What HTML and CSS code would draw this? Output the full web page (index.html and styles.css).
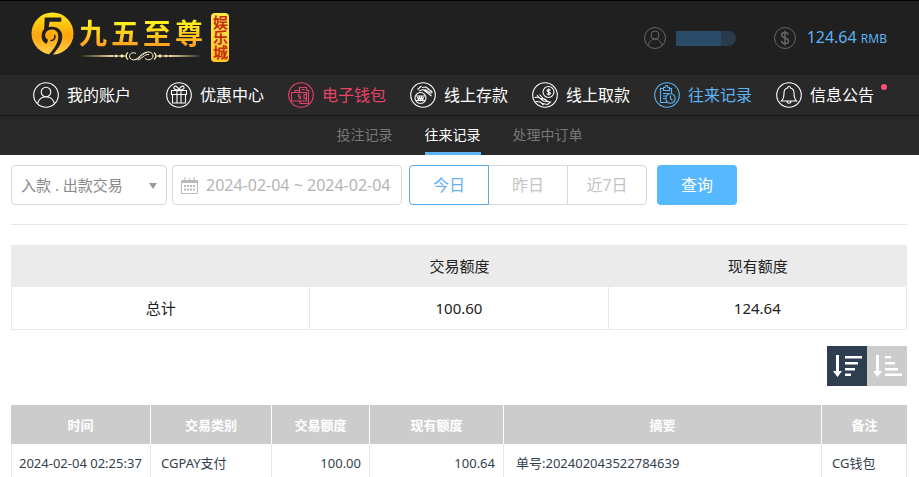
FILE: index.html
```html
<!DOCTYPE html>
<html lang="zh-CN">
<head>
<meta charset="utf-8">
<meta name="viewport" content="width=device-width, initial-scale=1">
<title>往来记录</title>
<link rel="stylesheet" href="styles.css">
</head>
<body>
<header class="top">
  <a class="logo" href="#">
    <svg class="logo-mark" viewBox="0 0 44 44" aria-hidden="true">
      <defs>
        <linearGradient id="gold" x1="0" y1="0" x2="0" y2="1">
          <stop offset="0" stop-color="#ffe816"/>
          <stop offset="0.55" stop-color="#ffa40c"/>
          <stop offset="1" stop-color="#ffd04a"/>
        </linearGradient>
      </defs>
      <circle cx="22" cy="22" r="21.5" fill="url(#gold)"/>
      <path d="M14 5.500H31V10H19L18 15.500C26 13.500 32 18 32 25C32 33 26 39 22 44H18C23 38 28 32 28 25C28 20.500 25 18 21.500 18C17 18 14.500 21 14.500 24C14.500 26 15.500 27.500 17.500 28.500L16 32.500C12 31 10.500 27.500 11 23.500C11.300 21 12 19 13.500 17.500Z" fill="#202020"/>
      <path d="M20 29.500C24 29 25.500 26 24 23.500" fill="none" stroke="#202020" stroke-width="1.500"/>
    </svg>
    <span class="logo-words">
      <span class="logo-name"><span>九</span><span>五</span><span>至</span><span>尊</span></span>
      <svg class="logo-flourish" viewBox="0 0 124 12" aria-hidden="true">
        <path d="M0 6L34 5V7ZM124 6L90 5V7Z" fill="#e9dda0"/>
        <path d="M34 6H48M76 6H90" stroke="#f5ebb0" fill="none"/>
        <path d="M35 6l2-1.500 2 1.500-2 1.500ZM41 6l2-2 2 2-2 2ZM79 6l2-2 2 2-2 2ZM85 6l2-1.500 2 1.500-2 1.500Z" fill="#f5ebb0"/>
        <path d="M49 2.500Q45 6 49 9.500M75 2.500Q79 6 75 9.500" stroke="#f5ebb0" stroke-width="1.300" fill="none"/>
        <path d="M57 3.500C53 1 49 5 51 8C55 12.500 61 8 64 4.500C68 0 74 2 74 6C74 9.500 69 11 66 8.500M56 9.500C60 9 61 3 68 2.500M59 10C63 9 65 4 70 4.500" stroke="#fff6c8" stroke-width="1" fill="none"/>
      </svg>
    </span>
    <span class="logo-tag">娱乐城</span>
  </a>
  <div class="account">
    <svg class="account-icon" viewBox="0 0 24 24" aria-hidden="true">
      <circle cx="12" cy="12" r="10.500"/><circle cx="12" cy="9" r="4"/><path d="M5 19.500C6 15 9 13 12 13s6 2 7 6.500"/>
    </svg>
    <span class="account-name"></span>
    <svg class="account-icon" viewBox="0 0 24 24" aria-hidden="true">
      <circle cx="12" cy="12" r="10.500"/><path stroke-width="1.500" d="M15.500 8.500C15 7 13.500 6.500 12 6.500c-2 0-3.300 1-3.300 2.600 0 3.700 6.800 2 6.800 5.600 0 1.700-1.500 2.800-3.500 2.800-2 0-3.300-.8-3.700-2.500M12 4.500v15"/>
    </svg>
    <span class="balance">124.64 <small>RMB</small></span>
  </div>
</header>

<nav class="main-nav">
  <a class="nav-item nav-item-lead" href="#">
    <svg viewBox="0 0 26 26" aria-hidden="true"><circle cx="13" cy="13" r="12.300"/><circle cx="13" cy="10" r="4.800"/><path d="M4.500 21.500C6 17 9 14.800 13 14.800s7 2.200 8.500 6.700"/></svg>
    我的账户
  </a>
  <a class="nav-item" href="#">
    <svg viewBox="0 0 26 26" aria-hidden="true"><circle cx="13" cy="13" r="12.300"/><path d="M5.500 8.500h15v4h-15ZM6.500 12.500h13v8.500h-13ZM11 8.500V21M15 8.500V21M13 8C10 8 7 7 8 5s4-.5 5 3c1-3.500 4-5 5-3s-2 3-5 3"/></svg>
    优惠中心
  </a>
  <a class="nav-item nav-item-wallet" href="#">
    <svg viewBox="0 0 26 26" aria-hidden="true"><circle cx="13" cy="13" r="12.300"/><path d="M3.500 10.500h15V19h-15ZM7 10.500V8.500h4M11.500 10.500v-5h7v3M13.500 7.500h3M18.500 8.500h2V21.500h-8.500V19M18.500 12.500h-2.500v4h2.500"/><path d="M12.500 12.700h-2v2h2v2h-2"/></svg>
    电子钱包
  </a>
  <a class="nav-item" href="#">
    <svg viewBox="0 0 26 26" aria-hidden="true"><circle cx="13" cy="13" r="12.300"/><circle cx="10.500" cy="16" r="5.500"/><path d="M6 14h9M6 18.500h9M7.500 15l1 3 1-3 1 3 1-3 1 3 1-3M7.500 7.500l4-3.500M9 9l4-1.500 4 3 4.500 3.500M12 5.500l4-.5 6.500 5.500M14.500 7.500l7 4M17 6.500l5 3"/></svg>
    线上存款
  </a>
  <a class="nav-item" href="#">
    <svg viewBox="0 0 26 26" aria-hidden="true"><circle cx="13" cy="13" r="12.300"/><circle cx="16.500" cy="10" r="5.500"/><path d="M18.300 8.500c-.5-1.300-3.300-1.300-3.300.2s3.500 1 3.500 2.600-3 1.500-3.600.2M16.700 6.500v7M2.500 15.500l4-.5-1.500-2M6.500 15l5 4M7.500 12.500l5 5.500M3.500 19.500l5 .5 3 3M11.500 19l7 1-3 2.500-5-1M9 16.500l4 .5 3 3"/></svg>
    线上取款
  </a>
  <a class="nav-item nav-item-current" href="#" aria-current="page">
    <svg viewBox="0 0 26 26" aria-hidden="true"><circle cx="13" cy="13" r="12.300"/><path d="M9.500 6.500h-3v14H13M15.500 6.500h2v5M9.500 8.500v-3H11c0-2.500 3-2.500 3 0h1.500v3ZM9 11.500h6M9 14h3.500M9 16.500h2.500"/><circle cx="16.500" cy="16.500" r="4.700"/><path d="M16.500 13.500v3l2 2"/></svg>
    往来记录
  </a>
  <a class="nav-item" href="#">
    <svg viewBox="0 0 26 26" aria-hidden="true"><circle cx="13" cy="13" r="12.300"/><path d="M5.500 19c2-2 2.500-3.500 2.500-8 0-3 1.500-4.500 3.500-5 0-2 3-2 3 0 2 .5 3.500 2 3.500 5 0 4.500.5 6 2.500 8ZM11 19c0 3 4 3 4 0"/></svg>
    信息公告
    <span class="nav-dot"></span>
  </a>
</nav>

<nav class="sub-nav">
  <a href="#">投注记录</a>
  <a class="is-active" href="#">往来记录</a>
  <a href="#">处理中订单</a>
</nav>

<main class="content">
  <form class="filters">
    <div class="select-box">
      <select aria-label="交易类型"><option>入款 . 出款交易</option></select>
    </div>
    <label class="date-box">
      <svg viewBox="0 0 17 17" aria-hidden="true"><path fill="none" stroke="currentColor" d="M.5 3.500h16v13H.5ZM1 4.500h15M1 5.500h15M4 0v3M8.500 1v3M13 0v3"/><path fill="none" stroke="currentColor" stroke-width="2" stroke-dasharray="2 1" d="M3 9h11M3 12.500h11"/></svg>
      <input type="text" value="2024-02-04 ~ 2024-02-04" aria-label="日期范围">
    </label>
    <div class="day-group">
      <button type="button" class="is-active">今日</button>
      <button type="button">昨日</button>
      <button type="button">近7日</button>
    </div>
    <button type="submit" class="query">查询</button>
  </form>

  <table class="summary">
    <thead><tr><th></th><th>交易额度</th><th>现有额度</th></tr></thead>
    <tbody><tr><td>总计</td><td>100.60</td><td>124.64</td></tr></tbody>
  </table>

  <div class="sort">
    <button type="button" class="is-active" aria-label="降序">
      <svg viewBox="0 0 40 40" aria-hidden="true"><path d="M9 9h3v16h3l-4.500 6L6 25h3ZM18 10h17v2.500H18ZM18 16h13v2.500H18ZM18 22h10v2.500H18ZM18 27.500h6V30h-6Z"/></svg>
    </button>
    <button type="button" aria-label="升序">
      <svg viewBox="0 0 40 40" aria-hidden="true"><path d="M9 9h3v16h3l-4.500 6L6 25h3ZM18 10h6v2.500h-6ZM18 16h10v2.500H18ZM18 22h13v2.500H18ZM18 27.500h17V30H18Z"/></svg>
    </button>
  </div>

  <table class="records">
    <colgroup><col class="col-time"><col class="col-type"><col class="col-amount"><col class="col-balance"><col><col class="col-note"></colgroup>
    <thead>
      <tr><th>时间</th><th>交易类别</th><th>交易额度</th><th>现有额度</th><th>摘要</th><th>备注</th></tr>
    </thead>
    <tbody>
      <tr><td class="time">2024-02-04 02:25:37</td><td>CGPAY支付</td><td class="num">100.00</td><td class="num">100.64</td><td class="memo">单号:202402043522784639</td><td>CG钱包</td></tr>
    </tbody>
  </table>
</main>
</body>
</html>
```
FILE: styles.css
```css
* {
  box-sizing: border-box;
}

body {
  height: 100vh;
  margin: 0;
  overflow: auto;
  scrollbar-width: none;
  background: #fff;
  color: #222;
  font: 15px/20px "Noto Sans", "Noto Sans CJK SC", sans-serif;
}

a {
  color: inherit;
  text-decoration: none;
}

button,
input,
select {
  margin: 0;
  font: inherit;
}

/* Header */
.top {
  display: flex;
  justify-content: space-between;
  height: 75px;
  padding: 0 32px 0 31px;
  border-top: 1px solid #000;
  background: #202020;
}

.logo {
  display: flex;
  align-items: flex-start;
  padding-top: 11px;
}

.logo-mark {
  width: 43px;
  height: 43px;
}

.logo-words {
  display: flex;
  flex-direction: column;
  margin: 4px 8px 0 5px;
}

.logo-name {
  display: flex;
  gap: 4px;
  font-size: 28px;
  font-weight: 700;
  line-height: 34px;
}

.logo-name span {
  background: linear-gradient(#fff21c 20%, #ffa51e 85%);
  background-clip: text;
  -webkit-background-clip: text;
  color: transparent;
}

.logo-flourish {
  width: 124px;
  height: 12px;
}

.logo-tag {
  width: 18px;
  margin-top: 1px;
  padding: 2px 0;
  border-radius: 4px;
  background: linear-gradient(#ffe94a, #ffc928);
  color: #c62b10;
  font-size: 15px;
  font-weight: 700;
  line-height: 18px;
  white-space: nowrap;
  writing-mode: vertical-rl;
}

.account {
  display: flex;
  align-items: center;
  color: #5cb3f5;
  font-size: 16px;
}

.account-icon {
  width: 24px;
  height: 24px;
  fill: none;
  stroke: #666;
}

.account-name {
  width: 60px;
  height: 15px;
  margin: 0 37px 0 9px;
  border-radius: 0 8px 8px 0;
  background: linear-gradient(90deg, #2a4b68 75%, #283a4b 75%);
}

.balance {
  margin-left: 10px;
}

.balance small {
  font-size: 12px;
}

/* Navigation */
.main-nav {
  display: flex;
  gap: 24px;
  height: 41px;
  padding-left: 33px;
  border-bottom: 1px solid #151515;
  background: #292929;
  color: #fff;
  font-size: 16px;
}

.nav-item {
  position: relative;
  display: flex;
  align-items: center;
  gap: 8px;
  white-space: nowrap;
}

.nav-item-lead {
  margin-right: 11px;
}

.nav-item svg {
  width: 26px;
  height: 26px;
  fill: none;
  stroke: currentColor;
  stroke-width: 1.1;
}

.nav-item-wallet {
  color: #e8416a;
}

.nav-item-current {
  color: #5cb3f5;
}

.nav-dot {
  position: absolute;
  top: 9px;
  right: -13px;
  width: 6px;
  height: 6px;
  border-radius: 50%;
  background: #ff4f78;
}

.sub-nav {
  display: flex;
  justify-content: center;
  gap: 32px;
  height: 39px;
  background: #282828;
  color: #777;
  font-size: 14px;
  line-height: 38px;
}

.sub-nav .is-active {
  border-bottom: 3px solid #5cb3f5;
  color: #fff;
}

/* Filters */
.content {
  padding: 10px 12px 0 11px;
}

.filters {
  display: flex;
  padding-bottom: 19px;
  border-bottom: 1px solid #e6e6e6;
}

.select-box {
  position: relative;
  width: 156px;
  margin-right: 5px;
}

.select-box::after {
  content: "";
  position: absolute;
  top: 18px;
  right: 10px;
  border: 4px solid transparent;
  border-top: 6px solid #999;
  border-bottom: 0;
  pointer-events: none;
}

.select-box select {
  width: 100%;
  height: 40px;
  padding: 0 9px;
  border: 1px solid #d8d8d8;
  border-radius: 4px;
  background: #fff;
  color: #888;
  appearance: none;
}

.date-box {
  display: flex;
  align-items: center;
  gap: 8px;
  width: 230px;
  height: 40px;
  margin-right: 7px;
  padding-left: 8px;
  border: 1px solid #d8d8d8;
  border-radius: 4px;
  color: #bbb;
  font-size: 16px;
}

.date-box svg {
  flex: none;
  width: 17px;
  height: 17px;
}

.date-box input {
  flex: 1;
  min-width: 0;
  padding: 0;
  border: 0;
  background: none;
  color: #b4b4b4;
}

.day-group {
  display: flex;
  margin-right: 10px;
}

.day-group button {
  width: 80px;
  height: 40px;
  padding: 0;
  border: 1px solid #d8d8d8;
  background: #fff;
  color: #c4c4c4;
  font-size: 16px;
}

.day-group button + button {
  margin-left: -1px;
}

.day-group button:first-child {
  border-radius: 4px 0 0 4px;
}

.day-group button:last-child {
  border-radius: 0 4px 4px 0;
}

.day-group .is-active {
  position: relative;
  border-color: #5aaae8;
  color: #6ab0ee;
}

.query {
  width: 80px;
  height: 40px;
  padding: 0;
  border: 0;
  border-radius: 4px;
  background: #56b8ff;
  color: #fff;
  font-size: 16px;
}

/* Tables */
table {
  width: 100%;
  border-collapse: separate;
  border-spacing: 0;
  table-layout: fixed;
}

.summary {
  margin-top: 20px;
  border-left: 1px solid #e8e8e8;
  text-align: center;
}

.summary th {
  height: 42px;
  padding: 0;
  background: #ebebeb;
  font-weight: 400;
}

.summary td {
  height: 43px;
  padding: 0;
  border-right: 1px solid #e8e8e8;
  border-bottom: 1px solid #e8e8e8;
}

.sort {
  display: flex;
  justify-content: flex-end;
  margin: 16px 0 19px;
}

.sort button {
  width: 40px;
  height: 40px;
  padding: 0;
  border: 0;
  background: #ccc;
}

.sort .is-active {
  background: #2f3d51;
}

.sort svg {
  display: block;
  fill: #fff;
}

.records {
  color: #333f4d;
  font-size: 13px;
}

.col-time {
  width: 140px;
}

.col-type {
  width: 121px;
}

.col-amount {
  width: 98px;
}

.col-balance {
  width: 134px;
}

.col-note {
  width: 85px;
}

.records th {
  height: 39px;
  padding: 0;
  border-right: 1px solid #fff;
  background: #ccc;
  color: #fff;
  font-weight: 700;
}

.records th:last-child {
  border-right: 0;
}

.records td {
  height: 39px;
  padding: 0 8px 0 10px;
  border-right: 1px solid #e8e8e8;
  border-bottom: 1px solid #e8e8e8;
  white-space: nowrap;
}

.records td.time {
  padding: 0 4px 0 7px;
  border-left: 1px solid #e8e8e8;
}

.records td.num {
  text-align: right;
}

.records td.memo {
  padding-left: 12px;
}
```
